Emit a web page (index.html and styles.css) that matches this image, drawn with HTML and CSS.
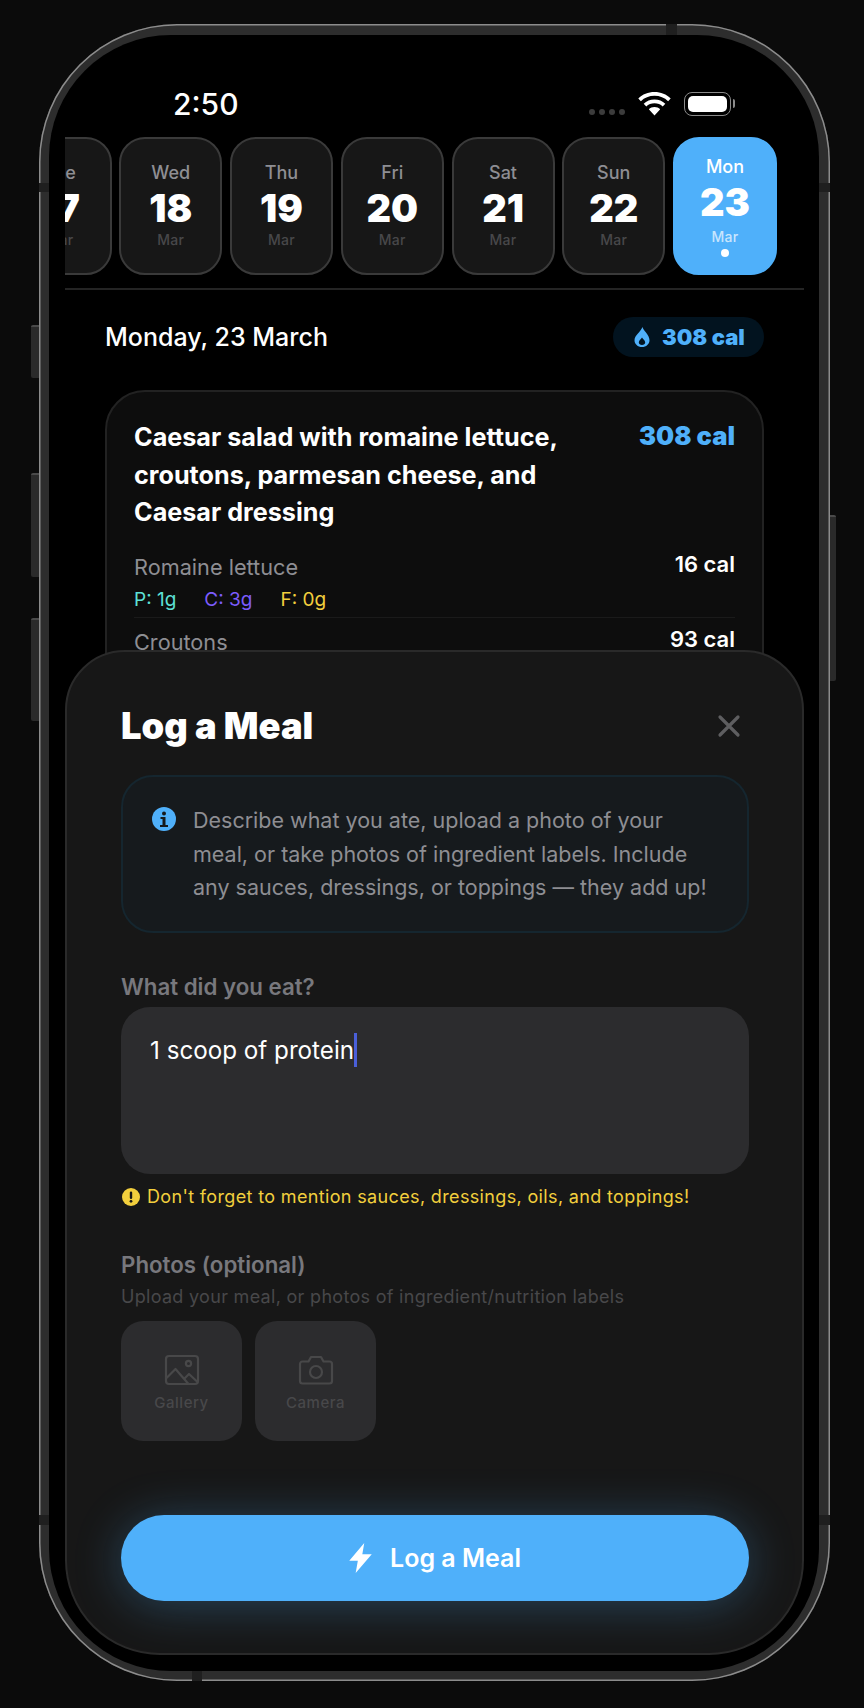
FILE: index.html
```html
<!DOCTYPE html>
<html lang="en">
<head>
    <meta charset="UTF-8">
    <meta name="viewport" content="width=device-width, initial-scale=1.0">
    <title>Log a Meal</title>
    <link rel="stylesheet" href="styles.css">
</head>
<body>
    <div class="phone">
        <span class="side-btn silent"></span>
        <span class="side-btn vol-up"></span>
        <span class="side-btn vol-down"></span>
        <span class="side-btn power"></span>
        <span class="seam seam-tl"></span>
        <span class="seam seam-tr"></span>
        <span class="seam seam-bl"></span>
        <span class="seam seam-br"></span>
        <span class="seam seam-top"></span>
        <span class="seam seam-bottom"></span>

        <div class="screen">
            <div class="status-bar">
                <span class="time">2:50</span>
                <div class="status-icons">
                    <div class="signal"><i></i><i></i><i></i><i></i></div>
                    <svg class="wifi" viewBox="0 0 33 24" width="33" height="24">
                        <path d="M16.5 0C10.2 0 4.5 2.4.3 6.4l2.6 2.8c3.5-3.4 8.3-5.4 13.6-5.4s10.1 2 13.6 5.4l2.6-2.8C28.5 2.4 22.8 0 16.5 0z" fill="#fff"/>
                        <path d="M16.5 7.5c-4.2 0-8 1.6-10.8 4.2l2.6 2.8c2.1-2 5-3.2 8.2-3.2s6.1 1.2 8.2 3.2l2.6-2.8c-2.8-2.6-6.6-4.2-10.8-4.2z" fill="#fff"/>
                        <path d="M16.5 15c-2.2 0-4.2.8-5.7 2.2l5.7 6.3 5.7-6.3c-1.5-1.4-3.5-2.2-5.7-2.2z" fill="#fff"/>
                    </svg>
                    <div class="battery"><div class="battery-fill"></div></div>
                </div>
            </div>

            <div class="date-strip">
                <div class="day"><span class="day-name">Tue</span><span class="day-num">17</span><span class="day-month">Mar</span></div>
                <div class="day"><span class="day-name">Wed</span><span class="day-num">18</span><span class="day-month">Mar</span></div>
                <div class="day"><span class="day-name">Thu</span><span class="day-num">19</span><span class="day-month">Mar</span></div>
                <div class="day"><span class="day-name">Fri</span><span class="day-num">20</span><span class="day-month">Mar</span></div>
                <div class="day"><span class="day-name">Sat</span><span class="day-num">21</span><span class="day-month">Mar</span></div>
                <div class="day"><span class="day-name">Sun</span><span class="day-num">22</span><span class="day-month">Mar</span></div>
                <div class="day active"><span class="day-name">Mon</span><span class="day-num">23</span><span class="day-month">Mar</span><span class="day-dot"></span></div>
            </div>

            <div class="content">
                <div class="date-row">
                    <h2>Monday, 23 March</h2>
                    <div class="total-pill">
                        <svg viewBox="0 0 16 20" width="16" height="20">
                            <path fill-rule="evenodd" d="M8.5 0C9 3.5 15.5 7.5 15.5 13.2 15.5 17 12.2 20 8 20S.5 17 .5 13.2C.5 8.5 6.5 5 8.5 0zM8 10.5c-1.5 2-3.2 3.3-3.2 5 0 1.5 1.4 2.5 3.2 2.5s3.2-1 3.2-2.5c0-1.7-1.7-3-3.2-5z" fill="#4fb0fa"/>
                        </svg>
                        <span>308 cal</span>
                    </div>
                </div>

                <div class="meal-card">
                    <div class="meal-head">
                        <h3>Caesar salad with romaine lettuce, croutons, parmesan cheese, and Caesar dressing</h3>
                        <span class="meal-cal">308 cal</span>
                    </div>
                    <div class="ingredient">
                        <div class="ingredient-main">
                            <span class="ingredient-name">Romaine lettuce</span>
                            <div class="macros"><span class="protein">P: 1g</span><span class="carbs">C: 3g</span><span class="fat">F: 0g</span></div>
                        </div>
                        <span class="ingredient-cal">16 cal</span>
                    </div>
                    <div class="ingredient">
                        <div class="ingredient-main">
                            <span class="ingredient-name">Croutons</span>
                        </div>
                        <span class="ingredient-cal">93 cal</span>
                    </div>
                </div>
            </div>

            <div class="sheet">
                <div class="sheet-head">
                    <h1>Log a Meal</h1>
                    <svg class="close" viewBox="0 0 24 24" width="24" height="24">
                        <path d="M3 3l18 18M21 3L3 21" stroke="#5e5e60" stroke-width="3.2" stroke-linecap="round" fill="none"/>
                    </svg>
                </div>

                <div class="info-box">
                    <svg class="info-icon" viewBox="0 0 24 24" width="24" height="24">
                        <circle cx="12" cy="12" r="12" fill="#4fb0fa"/>
                        <circle cx="12" cy="6.5" r="2" fill="#161a1d"/>
                        <path d="M8.5 10h5v8H16v2H8v-2h2.5v-6h-2z" fill="#161a1d"/>
                    </svg>
                    <p>Describe what you ate, upload a photo of your meal, or take photos of ingredient labels. Include any sauces, dressings, or toppings — they add up!</p>
                </div>

                <label class="field-label">What did you eat?</label>
                <div class="text-area"><span>1 scoop of protein</span><i class="caret"></i></div>

                <div class="hint">
                    <svg viewBox="0 0 18 18" width="18" height="18">
                        <circle cx="9" cy="9" r="9" fill="#f2cf3d"/>
                        <rect x="7.8" y="3.5" width="2.4" height="7.5" rx="1.2" fill="#161616"/>
                        <circle cx="9" cy="13.3" r="1.4" fill="#161616"/>
                    </svg>
                    <span>Don't forget to mention sauces, dressings, oils, and toppings!</span>
                </div>

                <label class="field-label photos-label">Photos (optional)</label>
                <p class="photos-sub">Upload your meal, or photos of ingredient/nutrition labels</p>

                <div class="photo-buttons">
                    <div class="photo-btn">
                        <svg viewBox="0 0 36 32" width="36" height="32" fill="none" stroke="#484849" stroke-width="2.2" stroke-linejoin="round">
                            <rect x="2" y="2" width="32" height="28" rx="3"/>
                            <circle cx="24.5" cy="9.5" r="2.6"/>
                            <path d="M2.5 24l9-9 13 15M20 25l5-5 8.5 8"/>
                        </svg>
                        <span>Gallery</span>
                    </div>
                    <div class="photo-btn">
                        <svg viewBox="0 0 36 32" width="36" height="32" fill="none" stroke="#484849" stroke-width="2.2" stroke-linejoin="round">
                            <path d="M4.5 7.5h6L13 3h10l2.500 4.500h6A2.500 2.500 0 0 1 34 10v17a2.500 2.500 0 0 1-2.500 2.500h-27A2.500 2.500 0 0 1 2 27V10a2.500 2.500 0 0 1 2.500-2.500z"/>
                            <circle cx="18" cy="18" r="6"/>
                        </svg>
                        <span>Camera</span>
                    </div>
                </div>

                <div class="sheet-spacer"></div>

                <div class="submit">
                    <svg viewBox="0 0 21 28" width="23" height="30">
                        <path d="M14 0L0 16.5h8L6 28 21 10.5h-8.8z" fill="#fff"/>
                    </svg>
                    <span>Log a Meal</span>
                </div>
            </div>
        </div>
    </div>
</body>
</html>
```

FILE: styles.css
```css
* {
    box-sizing: border-box;
}
body {
    margin: 0;
    height: 1708px;
    overflow: hidden;
    background-color: #0b0b0b;
    font-family: Inter, "Liberation Sans", sans-serif;
    color: #fff;
    padding: 24px 0 0 39px;
}
h1, h2, h3, p {
    margin: 0;
}

/* phone frame */
.phone {
    position: relative;
    width: 791px;
    height: 1657px;
    padding: 11px 11px 10px 10px;
    border-radius: 138px;
    background-color: #2d2d2d;
    box-shadow: inset 0 0 0 1.5px #8c8c8c;
}
.side-btn {
    position: absolute;
    background-color: #2a2a2a;
    border-top: 2px solid #4a4a4a;
}
.silent { left: -8px; top: 301px; width: 8px; height: 53px; border-radius: 2px 0 0 2px; }
.vol-up { left: -8px; top: 449px; width: 8px; height: 104px; border-radius: 2px 0 0 2px; }
.vol-down { left: -8px; top: 594px; width: 8px; height: 103px; border-radius: 2px 0 0 2px; }
.power { right: -6px; top: 491px; width: 6px; height: 166px; border-radius: 0 2px 2px 0; }
.seam {
    position: absolute;
    background-color: #1f1f1f;
}
.seam-tl { left: 0; top: 159px; width: 10px; height: 9px; }
.seam-tr { right: 0; top: 159px; width: 11px; height: 9px; }
.seam-bl { left: 0; top: 1491px; width: 10px; height: 10px; }
.seam-br { right: 0; top: 1491px; width: 11px; height: 10px; }
.seam-top { left: 627px; top: 0; width: 11px; height: 11px; }
.seam-bottom { left: 153px; bottom: 0; width: 10px; height: 10px; }

.screen {
    position: relative;
    width: 100%;
    height: 100%;
    border-radius: 122px;
    background-color: #000;
    overflow: hidden;
    padding: 0 15px 0 16px;
}

/* status bar */
.status-bar {
    display: flex;
    justify-content: space-between;
    align-items: center;
    height: 102px;
    padding: 36px 73px 0 108px;
}
.time {
    font-size: 30px;
    font-weight: 500;
}
.status-icons {
    display: flex;
    align-items: center;
    gap: 13px;
}
.signal {
    display: flex;
    gap: 4px;
    margin-top: 16px;
}
.signal i {
    width: 6px;
    height: 6px;
    border-radius: 50%;
    background-color: #3c3c3c;
}
.battery {
    position: relative;
    width: 47px;
    height: 24px;
    padding: 3px;
    border: 1.5px solid #8a8a8a;
    border-radius: 8px;
}
.battery::after {
    content: "";
    position: absolute;
    right: -5px;
    top: 6px;
    width: 2.5px;
    height: 9px;
    border-radius: 0 2px 2px 0;
    background-color: #8a8a8a;
}
.battery-fill {
    height: 100%;
    border-radius: 5px;
    background-color: #fff;
}

/* date strip */
.date-strip {
    display: flex;
    gap: 7.75px;
    justify-content: flex-end;
    height: 153px;
    padding: 0 27px 13px 0;
    overflow: hidden;
    border-bottom: 2px solid #242424;
}
.day {
    flex: 0 0 103px;
    height: 138px;
    display: flex;
    flex-direction: column;
    align-items: center;
    justify-content: center;
    border: 2px solid #3a3a3a;
    border-radius: 26px;
    background-color: #171717;
}
.day-name {
    font-size: 18px;
    font-weight: 500;
    line-height: 22px;
    color: #8e8e93;
}
.day-num {
    font-size: 38px;
    font-weight: 900;
    line-height: 44px;
    margin-top: 2px;
}
.day-month {
    font-size: 14px;
    font-weight: 500;
    line-height: 20px;
    color: #48484a;
    letter-spacing: 0.3px;
}
.day.active {
    flex-basis: 104px;
    background-color: #4fb0fa;
    border-color: #4fb0fa;
}
.day.active .day-name { color: #fff; }
.day.active .day-month {
    margin-top: 3px;
    color: rgba(255, 255, 255, 0.7);
}
.day-dot {
    width: 8px;
    height: 8px;
    margin-top: 2px;
    border-radius: 50%;
    background-color: #fff;
}

/* content */
.content {
    padding: 0 40px;
}
.date-row {
    display: flex;
    justify-content: space-between;
    align-items: center;
    height: 94px;
    margin-bottom: 6px;
}
.date-row h2 {
    font-size: 25px;
    font-weight: 500;
}
.total-pill {
    display: flex;
    align-items: center;
    gap: 12px;
    width: 151px;
    height: 40px;
    padding-left: 21px;
    border-radius: 20px;
    background-color: #02131f;
    color: #4fb0fa;
    font-size: 22px;
    font-weight: 900;
}
.meal-card {
    height: 400px;
    padding: 27px 27px 0;
    border: 2px solid #222;
    border-radius: 40px;
    background-color: #0d0d0d;
}
.meal-head {
    display: flex;
    justify-content: space-between;
    gap: 40px;
}
.meal-head h3 {
    flex: 1;
    font-size: 25.2px;
    font-weight: 700;
    line-height: 37.5px;
}
.meal-cal {
    font-size: 25.5px;
    font-weight: 900;
    color: #4fb0fa;
    margin-top: 1px;
}
.ingredient {
    display: flex;
    justify-content: space-between;
    align-items: flex-start;
    padding: 9px 0 5px;
    border-bottom: 1px solid #1a1a1a;
}
.meal-head + .ingredient {
    padding-top: 20px;
}
.ingredient-name {
    display: block;
    font-size: 21.7px;
    color: #8e8e93;
    line-height: 30px;
}
.ingredient-cal {
    font-size: 22px;
    font-weight: 600;
    line-height: 24px;
}
.macros {
    display: flex;
    gap: 28px;
    margin-top: 6px;
    font-size: 19px;
    line-height: 24px;
}
.protein { color: #5de0d6; }
.carbs { color: #7c5cfc; }
.fat { color: #f2cf3d; }

/* bottom sheet */
.sheet {
    position: absolute;
    left: 16px;
    right: 15px;
    top: 615px;
    bottom: 16px;
    display: flex;
    flex-direction: column;
    overflow: hidden;
    padding: 56px 53px 52px 54px;
    border: 2px solid #2a2a2a;
    border-radius: 60px 60px 95px 95px;
    background-color: #171717;
}
.sheet-head {
    display: flex;
    justify-content: space-between;
    align-items: center;
    height: 36px;
    margin-bottom: 31px;
}
.sheet-head h1 {
    font-size: 36.3px;
    font-weight: 900;
}
.close {
    margin-right: 8px;
}
.info-box {
    flex: none;
    display: flex;
    gap: 17px;
    height: 158px;
    padding: 27px 36px 0 29px;
    border: 2px solid #15262f;
    border-radius: 32px;
    background-color: #161a1d;
}
.info-icon {
    flex: none;
    margin-top: 3px;
}
.info-box p {
    font-size: 21.5px;
    line-height: 33.5px;
    color: #8e8e93;
}
.field-label {
    display: block;
    font-size: 22.3px;
    font-weight: 600;
    color: #78787d;
    line-height: 28px;
}
.info-box + .field-label {
    margin-top: 40px;
    margin-bottom: 6px;
}
.text-area {
    flex: none;
    display: flex;
    align-items: flex-start;
    height: 167px;
    padding: 27px 29px;
    border-radius: 29px;
    background-color: #2c2c2e;
    font-size: 24.2px;
    line-height: 34px;
}
.caret {
    width: 3px;
    height: 34px;
    margin-top: -1px;
    background-color: #4a5fd8;
}
.hint {
    display: flex;
    align-items: center;
    gap: 7px;
    margin-top: 11px;
    padding-left: 1px;
    font-size: 18px;
    letter-spacing: 0.35px;
    line-height: 24px;
    color: #f2cf3d;
}
.hint svg {
    flex: none;
}
.photos-label {
    margin-top: 42px;
}
.photos-sub {
    margin-top: 6px;
    font-size: 18px;
    letter-spacing: 0.3px;
    line-height: 24px;
    color: #48484a;
}
.photo-buttons {
    display: flex;
    gap: 13px;
    margin-top: 12px;
}
.photo-btn {
    width: 121px;
    height: 120px;
    display: flex;
    flex-direction: column;
    align-items: center;
    justify-content: center;
    gap: 8px;
    padding-top: 3px;
    border-radius: 22px;
    background-color: #2c2c2e;
    font-size: 15px;
    font-weight: 500;
    line-height: 18px;
    letter-spacing: 0.5px;
    color: #48484a;
}
.sheet-spacer {
    flex: 1;
}
.submit {
    flex: none;
    display: flex;
    align-items: center;
    justify-content: center;
    gap: 18px;
    height: 86px;
    border-radius: 43px;
    background-color: #4fb0fa;
    box-shadow: 0 4px 48px rgba(79, 176, 250, 0.3);
    font-size: 25px;
    font-weight: 600;
}
```
